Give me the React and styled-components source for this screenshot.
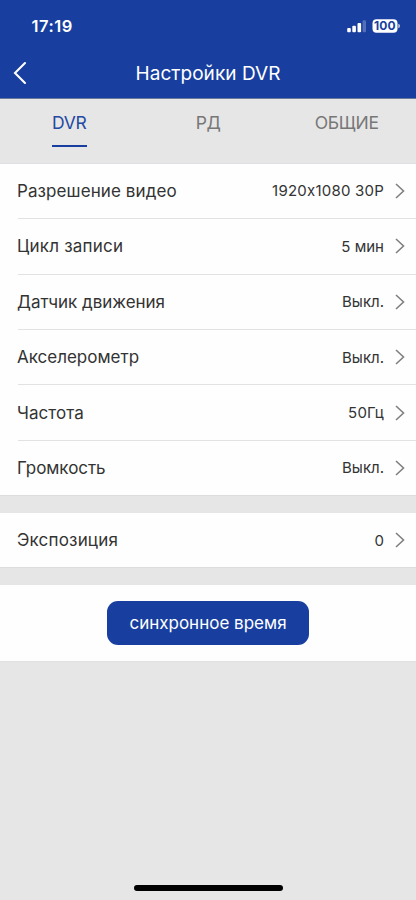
import React from "react";
import styled, { createGlobalStyle } from "styled-components";

const GlobalStyle = createGlobalStyle`
  * { box-sizing: border-box; }
  body {
    margin: 0;
    background: #e6e6e6;
    font-family: Inter, "Liberation Sans", sans-serif;
    font-feature-settings: "calt" 0;
    color: #333;
  }
  button { font: inherit; border: 0; padding: 0; background: none; }
`;

const Screen = styled.main`
  width: 416px;
  height: 900px;
  display: flex;
  flex-direction: column;
  background: #e6e6e6;
  overflow: hidden;
`;

const Header = styled.header`
  flex: none;
  height: 98.6px;
  background: #183f9f;
  border-bottom: 1px solid #6b7798;
  color: #fff;
`;

const StatusBar = styled.div`
  height: 50px;
  padding: 2px 16px 0 31.5px;
  display: flex;
  align-items: center;
  justify-content: space-between;
`;

const Clock = styled.span`
  font-size: 16.5px;
  font-weight: 600;
  letter-spacing: ${(p) => p.$tracking}px;
`;

const StatusIcons = styled.svg`
  display: block;
  width: 54px;
  height: 16px;
`;

const BatteryLevel = styled.text`
  font-size: 12px;
  font-weight: 700;
  fill: #183f9f;
`;

const NavBar = styled.div`
  height: 46px;
  display: grid;
  grid-template-columns: 48px 1fr 48px;
  align-items: center;
`;

const BackButton = styled.button`
  padding-left: 13px;
  display: flex;
  color: #fff;
`;

const Title = styled.h1`
  margin: 0;
  padding-top: 2px;
  text-align: center;
  font-size: 19px;
  line-height: 24px;
  font-weight: 400;
  letter-spacing: 0.05px;
`;

const Tabs = styled.nav`
  flex: none;
  height: 65px;
  display: grid;
  grid-template-columns: repeat(3, 1fr);
  justify-items: center;
  align-items: start;
  border-bottom: 1px solid #dfe0e3;
`;

const Tab = styled.button`
  height: 48px;
  display: flex;
  align-items: flex-start;
  padding-top: 13px;
  font-size: 17.5px;
  line-height: 22px;
  font-weight: 400;
  letter-spacing: ${(p) => p.$tracking}px;
  color: ${(p) => (p.$active ? "#2449a2" : "#777")};
  border-bottom: 2px solid ${(p) => (p.$active ? "#183f9f" : "transparent")};
`;

const Group = styled.section`
  flex: none;
  background: #fefefe;
  margin-bottom: 17px;
  border-bottom: 1px solid #dcdddf;
`;

const Row = styled.div`
  height: ${(p) => p.$height}px;
  margin-left: 17.5px;
  padding-right: 11px;
  display: flex;
  align-items: center;
  & + & { border-top: 1px solid #e2e2e3; }
`;

const Label = styled.span`
  flex: 1;
  margin-left: -0.5px;
  font-size: 17px;
  letter-spacing: ${(p) => p.$tracking}px;
`;

const Value = styled.span`
  font-size: 15px;
  margin-right: 11px;
  letter-spacing: ${(p) => p.$tracking}px;
`;

const SyncPanel = styled.section`
  flex: none;
  height: 76.4px;
  display: flex;
  justify-content: center;
  align-items: center;
  background: #fefefe;
  border-bottom: 1px solid #e0e1e3;
`;

const SyncButton = styled.button`
  width: 202px;
  height: 44px;
  border-radius: 11px;
  background: #183f9f;
  color: #fff;
  font-size: 17px;
  letter-spacing: 0;
`;

const HomeArea = styled.footer`
  margin-top: auto;
  padding-bottom: 9px;
  display: flex;
  justify-content: center;
`;

const HomeIndicator = styled.div`
  width: 149px;
  height: 6px;
  border-radius: 3px;
  background: #000;
`;

const Chevron = () => (
  <svg width="10" height="16" viewBox="0 0 10 16" fill="none" stroke="#808080" strokeWidth="1.6">
    <path d="M1 1L8.5 8L1 15" />
  </svg>
);

const settings = [
  { label: "Разрешение видео", labelTracking: 0.09, value: "1920x1080 30P", valueTracking: 0.22 },
  { label: "Цикл записи", labelTracking: 0.22, value: "5 мин" },
  { label: "Датчик движения", labelTracking: -0.03, value: "Выкл." },
  { label: "Акселерометр", value: "Выкл." },
  { label: "Частота", labelTracking: 0.05, value: "50Гц", valueTracking: 0.2 },
  { label: "Громкость", labelTracking: -0.05, value: "Выкл." },
];

const SettingRow = ({ item, height }) => (
  <Row $height={height}>
    <Label $tracking={item.labelTracking || 0}>{item.label}</Label>
    <Value $tracking={item.valueTracking || 0}>{item.value}</Value>
    <Chevron />
  </Row>
);

export default function App() {
  return (
    <>
      <GlobalStyle />
      <Screen>
        <Header>
          <StatusBar>
            <Clock $tracking={0.5}>17:19</Clock>
            <StatusIcons viewBox="0 0 54 16">
              <g fill="#fff">
                <rect x="1.2" y="10" width="3.6" height="4.2" rx="1" />
                <rect x="6.3" y="7.8" width="3.6" height="6.4" rx="1" />
                <rect x="11.5" y="5" width="3.6" height="9.2" rx="1" />
                <rect x="16.6" y="2.2" width="3.4" height="12" rx="1" opacity="0.25" />
                <rect x="26.5" y="1.2" width="25" height="13.6" rx="4" />
                <path d="M52.3 5.7Q54 6.2 54 8T52.3 10.3Z" opacity="0.75" />
              </g>
              <BatteryLevel x="38.8" y="12.3" textAnchor="middle" textLength="21.5">100</BatteryLevel>
            </StatusIcons>
          </StatusBar>
          <NavBar>
            <BackButton aria-label="Назад">
              <svg width="14" height="24" viewBox="0 0 14 24" fill="none" stroke="#fff" strokeWidth="2.1" strokeLinecap="round">
                <path d="M12 2L2 12L12 22" />
              </svg>
            </BackButton>
            <Title>Настройки DVR</Title>
          </NavBar>
        </Header>
        <Tabs>
          <Tab $active $tracking={-0.25}>DVR</Tab>
          <Tab $tracking={-0.4}>РД</Tab>
          <Tab $tracking={-0.3}>ОБЩИЕ</Tab>
        </Tabs>
        <Group>
          {settings.map((item, i) => (
            <SettingRow key={item.label} item={item} height={i === 0 ? 54.6 : 55.4} />
          ))}
        </Group>
        <Group>
          <SettingRow item={{ label: "Экспозиция", labelTracking: 0.18, value: "0" }} height={54} />
        </Group>
        <SyncPanel>
          <SyncButton>синхронное время</SyncButton>
        </SyncPanel>
        <HomeArea>
          <HomeIndicator />
        </HomeArea>
      </Screen>
    </>
  );
}
